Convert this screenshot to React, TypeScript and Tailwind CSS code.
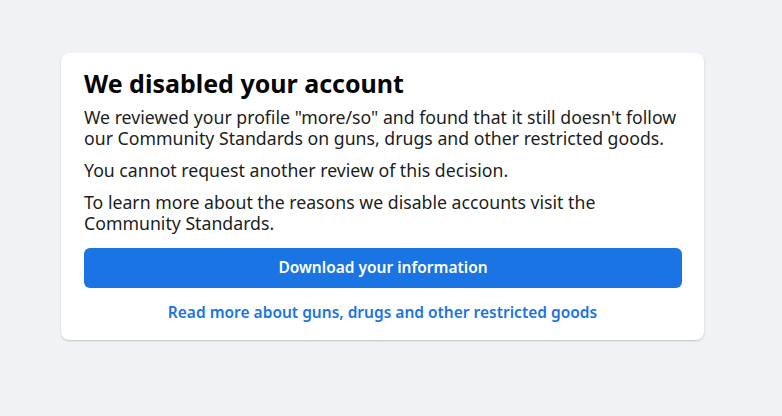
export default function App() {
  return (
    <div
      className="min-h-[416px] w-full bg-[#f0f2f5] pl-[61px] pt-[53px]"
      style={{ fontFamily: '"Segoe UI", "Noto Sans", Helvetica, Arial, sans-serif' }}
    >
      <div className="w-[643px] rounded-lg bg-white px-[23px] pb-[16px] pt-[14px] shadow-[0_1px_2px_rgba(0,0,0,0.2)]">
        <h1 className="text-[25px] font-bold leading-[32px] text-[#050505]">We disabled your account</h1>
        <div className="mt-[8px] flex flex-col gap-[11px] text-[17.7px] leading-[21px] text-[#1c1e21]">
          <p>
            We reviewed your profile "more/so" and found that it still doesn't follow our Community Standards on
            guns, drugs and other restricted goods.
          </p>
          <p>You cannot request another review of this decision.</p>
          <p>To learn more about the reasons we disable accounts visit the Community Standards.</p>
        </div>
        <button className="mt-[14px] flex h-[40px] w-[598px] items-center justify-center rounded-md bg-[#1b74e4] text-[15.5px] font-semibold text-white">
          Download your information
        </button>
        <div className="mt-[12px] text-center">
          <a className="text-[15.5px] font-semibold text-[#1b74e4]">Read more about guns, drugs and other restricted goods</a>
        </div>
      </div>
    </div>
  );
}
